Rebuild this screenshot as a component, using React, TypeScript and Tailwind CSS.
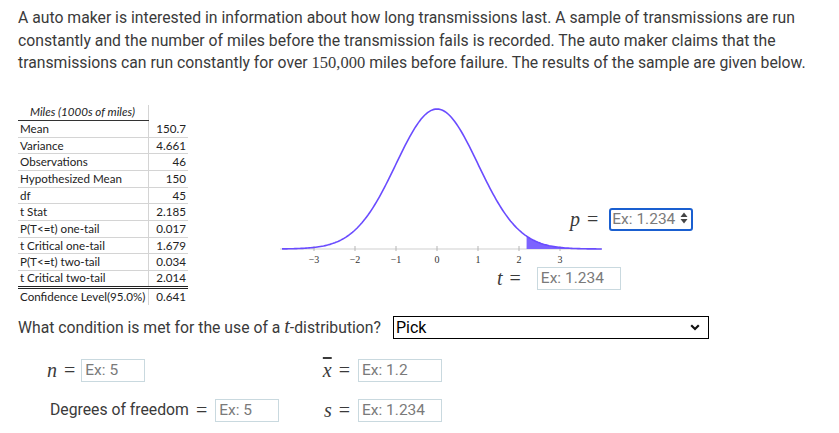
const rows: [string, string][] = [
  ["Mean", "150.7"],
  ["Variance", "4.661"],
  ["Observations", "46"],
  ["Hypothesized Mean", "150"],
  ["df", "45"],
  ["t Stat", "2.185"],
  ["P(T<=t) one-tail", "0.017"],
  ["t Critical one-tail", "1.679"],
  ["P(T<=t) two-tail", "0.034"],
  ["t Critical two-tail", "2.014"],
];

const serif = "font-['Liberation_Serif',serif]";

// curve geometry (svg coords)
const X0 = 167;
const U = 41;
const AX = 144;
const H = 140;
const fx = (t: number) => X0 + U * t;
const fy = (t: number) => AX - H * Math.exp((-t * t) / 2);

function curvePath(a: number, b: number) {
  let d = "";
  for (let i = 0; i <= 200; i++) {
    const t = a + ((b - a) * i) / 200;
    d += (i === 0 ? "M" : "L") + fx(t).toFixed(2) + " " + fy(t).toFixed(2) + " ";
  }
  return d;
}

const shade = curvePath(2.185, 4.02) + `L${fx(4.02)} ${AX} L${fx(2.185)} ${AX} Z`;

function Field({ ph, w }: { ph: string; w: string }) {
  return (
    <input
      readOnly
      placeholder={ph}
      className={`${w} h-[23px] border border-[#c9d9df] px-[3px] text-[15.5px] placeholder:text-[#7a7a7a] outline-none font-['Roboto',sans-serif]`}
    />
  );
}

function V({ children }: { children: React.ReactNode }) {
  return <span className={`${serif} italic text-[20px] leading-none`}>{children}</span>;
}

function Eq() {
  return <span className={`${serif} text-[20px] leading-none ml-[7px]`}>=</span>;
}

export default function App() {
  return (
    <main className="w-[839px] h-[433px] bg-white pl-[18px] pt-[7px] text-[#3a3a3a] font-['Roboto',sans-serif] overflow-hidden">
      <p className="text-[15.75px] leading-[22.5px] w-[815px]">
        A auto maker is interested in information about how long transmissions last. A sample of transmissions are run
        constantly and the number of miles before the transmission fails is recorded. The auto maker claims that the
        transmissions can run constantly for over{" "}
        <span className={`${serif} text-[16.5px] leading-none`}>150,000</span> miles before failure. The results of the
        sample are given below.
      </p>

      <div className="flex items-start mt-[30px]">
        {/* summary table */}
        <table className="w-[170px] border-collapse font-['Lato',sans-serif] text-[11.6px] text-[#222]">
          <tbody>
            <tr className="h-[16px]">
              <td className="w-[130px] border-b border-[#333] pl-[12px] italic leading-none">Miles (1000s of miles)</td>
              <td className="border-l border-[#d4d4d4]" />
            </tr>
            {rows.map(([k, v], i) => (
              <tr
                key={k}
                className={`h-[16.67px] ${i === rows.length - 1 ? "border-b-[3px] border-double border-[#222]" : "border-b border-[#d4d4d4]"}`}
              >
                <td className="leading-none pl-[2px]">{k}</td>
                <td className="border-l border-[#d4d4d4] text-right pr-[2px] leading-none">{v}</td>
              </tr>
            ))}
            <tr className="h-[18px]">
              <td className="leading-none pl-[2px] whitespace-nowrap">Confidence Level(95.0%)</td>
              <td className="border-l border-[#d4d4d4] text-right pr-[2px] leading-none">0.641</td>
            </tr>
          </tbody>
        </table>

        {/* distribution graph */}
        <div className="relative ml-[82px] flex flex-col">
          <svg width="340" height="161" className="block">
            <line x1="10" y1={AX} x2="332" y2={AX} stroke="#cfcfcf" strokeWidth="1.2" />
            {[-3, -2, -1, 0, 1, 2, 3].map((t) => (
              <g key={t}>
                <line x1={fx(t)} y1={AX - 3} x2={fx(t)} y2={AX + 2} stroke="#b5b5b5" strokeWidth="1" />
                <text x={fx(t)} y={AX + 14} fontSize="10" textAnchor="middle" fill="#333" fontFamily="Liberation Serif, serif">
                  {t < 0 ? "\u2212" + -t : t}
                </text>
              </g>
            ))}
            <path d={shade} fill="#7c63ff" />
            <path d={curvePath(-3.78, 4.02)} fill="none" stroke="#6a4cff" strokeWidth="1.6" />
          </svg>

          <div className="absolute left-[300px] top-[102px] flex items-center">
            <V>p</V>
            <Eq />
            <div className="relative ml-[11px]">
              <input
                readOnly
                placeholder="Ex: 1.234"
                className="w-[84px] h-[23px] border-2 border-[#1a5fd0] rounded-[3px] pl-[1px] text-[15.5px] placeholder:text-[#7a7a7a] outline-none"
              />
              <svg width="8" height="12" viewBox="0 0 8 12" className="absolute right-[5px] top-[5.5px]">
                <path d="M4 0.5 L7.5 5 L0.5 5 Z" fill="#444" />
                <path d="M4 11.5 L7.5 7 L0.5 7 Z" fill="#444" />
              </svg>
            </div>
          </div>

          <div className="flex items-center ml-[227px]">
            <V>t</V>
            <Eq />
            <div className="ml-[16px]">
              <Field ph="Ex: 1.234" w="w-[84px]" />
            </div>
          </div>
        </div>
      </div>

      <div className="flex items-center mt-[11px] text-[15.75px]">
        <span>
          What condition is met for the use of a <V>t</V>-distribution?
        </span>
        <div className="ml-[12px] w-[316px] h-[23px] border-[1.5px] border-black flex items-center justify-between pl-[2px] pr-[8px] text-black text-[16px]">
          <span>Pick</span>
          <svg width="10" height="7" viewBox="0 0 10 7">
            <path d="M1.2 1.2 L5 5 L8.8 1.2" fill="none" stroke="#111" strokeWidth="2.2" />
          </svg>
        </div>
      </div>

      <div className="flex items-center mt-[18px] text-[15.75px]">
        <div className="w-[282px] flex items-center pl-[29px]">
          <V>n</V>
          <Eq />
          <div className="ml-[6px]">
            <Field ph="Ex: 5" w="w-[64px]" />
          </div>
        </div>
        <div className="flex items-center">
          <span className="w-[50px] flex justify-end items-center">
            <V>
              <span className="overline">x</span>
            </V>
            <Eq />
          </span>
          <div className="ml-[8px]">
            <Field ph="Ex: 1.2" w="w-[84px]" />
          </div>
        </div>
      </div>

      <div className="flex items-center mt-[16px] text-[15.75px]">
        <div className="w-[282px] flex items-center pl-[32px]">
          <span>Degrees of freedom</span>
          <Eq />
          <div className="ml-[8px]">
            <Field ph="Ex: 5" w="w-[64px]" />
          </div>
        </div>
        <div className="flex items-center">
          <span className="w-[50px] flex justify-end items-center">
            <V>s</V>
            <Eq />
          </span>
          <div className="ml-[8px]">
            <Field ph="Ex: 1.234" w="w-[84px]" />
          </div>
        </div>
      </div>
    </main>
  );
}
